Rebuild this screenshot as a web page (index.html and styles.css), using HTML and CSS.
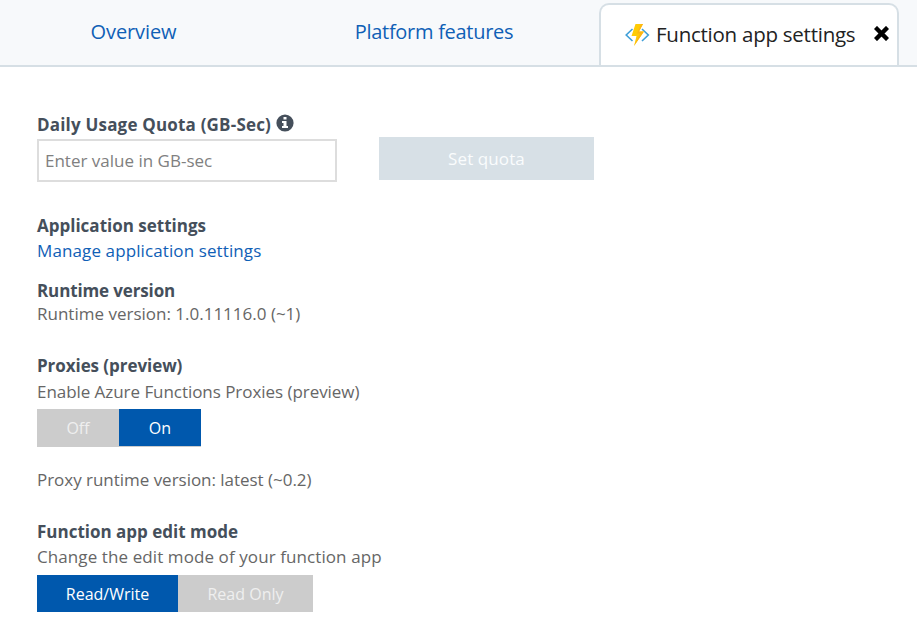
FILE: index.html
```html
<!DOCTYPE html>
<html lang="en">
<head>
<meta charset="utf-8">
<title>Function app settings</title>
<link rel="stylesheet" href="styles.css">
</head>
<body>
<nav class="tabs">
  <a class="tab overview"><span>Overview</span></a>
  <a class="tab platform"><span>Platform features</span></a>
  <div class="tab active">
    <svg class="bolt" width="25" height="22" viewBox="0 0 25 22">
      <path d="M7.500 5 1.200 11l6.300 6M17 5l6.300 6-6.300 6" fill="none" stroke="#3f9fd8" stroke-width="1.600"/>
      <path d="M10.500 0H18l-4 7.500h5L9 22l2.500-10H6.500z" fill="#ffcb05"/>
      <path d="M18 0l-4 7.500h5L9 22l6-12.500h-3L16 0z" fill="#fdb515"/>
    </svg>
    <span class="title">Function app settings</span>
    <svg class="close" width="15" height="15" viewBox="0 0 15 15">
      <path d="M3 3l9 9M12 3l-9 9" stroke="#000" stroke-width="4.400" stroke-linecap="square"/>
    </svg>
  </div>
</nav>
<main>
  <section class="quota">
    <div class="field">
      <h2><span class="t-quota">Daily Usage Quota (GB-Sec)</span>
        <svg width="18" height="18" viewBox="0 0 18 18"><circle cx="9" cy="9" r="8.600" fill="#454f5b"/><path d="M7.500 3h3v2.500h-3zM6 7h4.500v5H12v2H6v-2h1.500V9H6z" fill="#fff"/></svg>
      </h2>
      <input class="entry" type="text" placeholder="Enter value in GB-sec">
    </div>
    <button class="set" disabled>Set quota</button>
  </section>
  <section class="application">
    <h2><span>Application settings</span></h2>
    <p class="link"><a class="t-manage">Manage application settings</a></p>
  </section>
  <section class="runtime">
    <h2><span class="t-rt">Runtime version</span></h2>
    <p><span>Runtime version: 1.0.11116.0 (~1)</span></p>
  </section>
  <section class="proxies">
    <h2><span class="t-px">Proxies (preview)</span></h2>
    <p><span class="t-enable">Enable Azure Functions Proxies (preview)</span></p>
    <div class="toggle onoff"><span class="option">Off</span><span class="option selected">On</span></div>
    <p class="proxy-version"><span class="t-latest">Proxy runtime version: latest (~0.2)</span></p>
  </section>
  <section class="edit">
    <h2><span>Function app edit mode</span></h2>
    <p><span class="t-change">Change the edit mode of your function app</span></p>
    <div class="toggle mode"><span class="option selected">Read/Write</span><span class="option">Read Only</span></div>
  </section>
</main>
</body>
</html>
```
FILE: styles.css
```css
* { box-sizing: border-box; }
body { margin: 0; width: 917px; height: 640px; overflow: hidden; background: #fff; color: #666; font: 17px/24px "Open Sans", "Noto Sans", sans-serif; }
h2, p { margin: 0; height: 24px; font-size: 17px; line-height: 24px; white-space: nowrap; }
h2 { display: flex; color: #454f5b; font-weight: 700; }
.tabs { display: grid; grid-template-columns: 267px 332px 300px; height: 67px; background: #f7f9fb; border-bottom: 2px solid #d6dfe5; }
.tab { display: flex; justify-content: center; padding-top: 17px; color: #0f60b6; font-size: 20px; line-height: 30px; white-space: nowrap; }
.overview { letter-spacing: -.1px; }
.platform { padding-left: 2px; letter-spacing: -.28px; }
.tab.active { justify-content: flex-start; margin-top: 3px; padding: 14px 0 0 24px; border: 2px solid #d6dfe5; border-bottom: 0; border-radius: 10px 10px 0 0; background: #fff; color: #222; }
.bolt { flex: none; margin: 5px 6px 0 0; }
.title { width: 201px; font-size: 20.5px; letter-spacing: -.25px; }
.close { flex: none; margin: 7px 0 0 17px; }
main { padding: 46px 37px 0; }
.quota { display: flex; height: 69px; }
.field { width: 300px; }
.field h2 { height: 26px; }
.field svg { margin: 1px 0 0 5px; }
.t-quota { letter-spacing: .19px; }
.entry { display: block; width: 300px; height: 43px; padding: 0 6px; border: 2px solid #ddd; background: #fff; font: inherit; outline: none; }
.entry::placeholder { color: #808080; opacity: 1; }
.set { width: 215px; height: 43px; margin: 24px 0 0 42px; padding: 0; border: 0; background: #d7e0e6; color: #fafcfd; font: inherit; letter-spacing: .1px; }
.application { margin-top: 32px; }
.application .link { margin-top: 1px; color: #0f60b6; }
.t-manage { letter-spacing: .11px; }
.runtime { margin-top: 16px; }
.runtime p { margin-top: -1px; }
.t-rt { letter-spacing: -.13px; }
.proxies { margin-top: 28px; }
.proxies h2 { margin-bottom: 2px; }
.t-px { letter-spacing: -.06px; }
.t-enable { letter-spacing: -.05px; }
.t-latest { letter-spacing: -.03px; }
.t-change { letter-spacing: .09px; }
.toggle { display: flex; width: max-content; background: #ccc; color: #efefef; line-height: 38px; font-size: 16px; }
.option { text-align: center; }
.selected { background: #0058ad; color: #fff; height: 37px; }
.onoff { height: 38px; margin-top: 5px; }
.onoff .option { width: 82px; }
.proxy-version { margin-top: 21px; }
.edit { margin-top: 28px; }
.edit p { margin-top: 1px; }
.mode { height: 37px; margin-top: 6px; }
.mode .option { width: 135px; }
.mode .selected { width: 141px; }
```
